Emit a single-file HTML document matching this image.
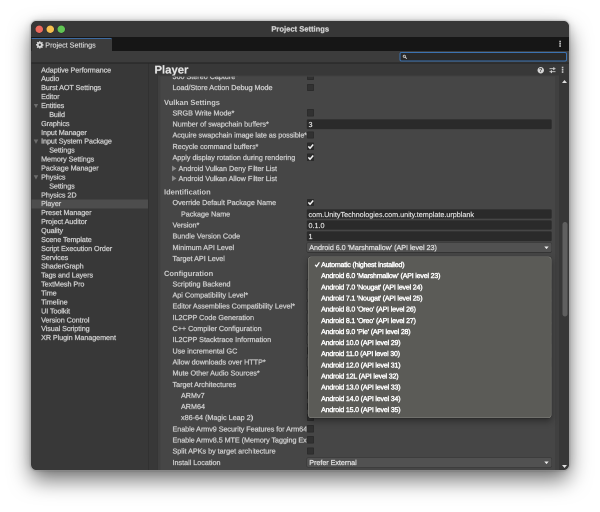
<!DOCTYPE html>
<html lang="en"><head><meta charset="utf-8"><title>Project Settings</title>
<style>
html,body{margin:0;padding:0;overflow:hidden}
body{width:600px;height:512px;background:#fff;overflow:hidden;position:relative;font-family:"Liberation Sans",sans-serif;font-size:7.2px;color:#cacaca;-webkit-text-stroke:.3px #cacaca;-webkit-font-smoothing:antialiased}
.a{position:absolute}
#root{position:absolute;left:0;top:0;width:600px;height:512px;zoom:2;transform:scale(.5);transform-origin:0 0;text-rendering:geometricPrecision;will-change:transform}
#win{position:absolute;left:31.1px;top:21.1px;width:537.7px;height:448.7px;border-radius:5.5px;background:#383838;overflow:hidden}
#inner{left:.4px;top:.4px;width:537.5px;height:448.5px}
#shadow{position:absolute;left:31.1px;top:21.1px;width:537.7px;height:448.7px;border-radius:5.5px;box-shadow:0 0 0 .5px rgba(255,255,255,.3),0 10px 22px rgba(0,0,0,.55),0 0 2px rgba(0,0,0,.5),0 0 10px rgba(0,0,0,.14)}
#title{left:-1px;top:-1px;width:540px;height:16.6px;background:#373737}
#title span{position:absolute;left:1px;width:537.5px;text-align:center;top:4.6px;font-weight:bold;font-size:7.6px;line-height:9px;color:#cfcfcf}
.tl{position:absolute;top:5px;width:7.3px;height:7.3px;border-radius:50%;box-shadow:0 0 0 .35px rgba(0,0,0,.35)}
#tabbar{left:0;top:15.6px;width:100%;box-shadow:-1px 0 0 #161616,1px 0 0 #161616;height:13.7px;background:#161616}
#tab{left:0;top:.9px;width:80.6px;height:12.8px;background:#3c3c3c;border-top:1.4px solid #3e6ba1;box-sizing:border-box;border-top-right-radius:1.6px}
#tab span{position:absolute;left:13.8px;top:2.2px;line-height:9px;color:#dadada;font-size:7.2px;-webkit-text-stroke:.15px #dadada}
#toolbar{left:0;top:29.3px;width:100%;box-shadow:-1px 0 0 #3c3c3c,1px 0 0 #3c3c3c;height:11.7px;background:#3c3c3c}
#search{left:367.8px;top:1.2px;width:167.8px;height:9.6px;box-sizing:border-box;border:1px solid #3b72b1;border-radius:2px;background:#292929}
#line1{left:0;top:41px;width:100%;height:.8px;background:#232323}
#sidebar{left:0;top:41.8px;width:116.3px;height:410px;background:#383838}
#split{left:116.3px;top:41.8px;width:.9px;height:410px;background:#2b2b2b}
.si{position:absolute;height:9px;line-height:9px;white-space:pre;letter-spacing:-.06px}
.sel{position:absolute;left:0;width:116.3px;height:8.9px;background:#4d4d4d}
.tri{position:absolute;width:4.6px;height:4.4px;background:#6c6c6c;clip-path:polygon(0 0,100% 0,50% 100%)}
.trr{position:absolute;width:4.6px;height:6px;background:#8c8c8c;clip-path:polygon(0 0,100% 50%,0 100%)}
#head{left:117.2px;top:41.8px;width:420.3px;height:12.4px;background:#383838}
#head b{position:absolute;left:5.8px;top:-.4px;font-size:11.3px;line-height:14px;color:#e6e6e6;letter-spacing:0}
#frame{left:126.6px;top:53.8px;width:400.7px;height:394.7px;background:#404040}
#content{left:127px;top:54.2px;width:397px;height:394.3px;overflow:hidden}
#cbg{left:2.1px;top:1px;width:394.4px;height:394px;background:#464646}
#cb{left:126.1px;top:53.8px;width:.6px;height:394.7px;background:#343434}
#track{left:527.5px;top:54.2px;width:10px;height:394.3px;background:#373737}
#thumb{left:530.8px;top:200.3px;width:5.4px;height:94.5px;border-radius:2.8px;background:#5f5f5f}
.lb{position:absolute;height:10px;line-height:10px;white-space:pre;overflow:hidden}
.h{font-weight:bold;color:#cdcdcd;font-size:7.5px;-webkit-text-stroke:0}
.ck{position:absolute;left:148.4px;width:7.3px;height:7.3px;background:#313131;border-radius:1.1px;box-shadow:inset 0 0 0 .6px #292929}
.ck.on{background:#2b2b2b}
.fd{position:absolute;left:148.6px;width:244.4px;height:9.3px;background:#2a2a2a;border-radius:1.2px;box-shadow:0 0 0 .3px #333;line-height:11.6px;color:#dedede;-webkit-text-stroke:.22px #dedede;white-space:pre;overflow:hidden;text-indent:1.4px}
.dd{position:absolute;left:148.6px;width:244.4px;height:9.4px;background:#515151;border-radius:1.2px;box-shadow:0 0 0 .5px #353535;line-height:10.4px;color:#dcdcdc;-webkit-text-stroke:.3px #dcdcdc;letter-spacing:-.04px;white-space:pre;overflow:hidden;text-indent:2.2px}
.dd i{position:absolute;right:2.6px;top:3.5px;width:4.8px;height:2.9px;background:#ececec;clip-path:polygon(0 0,100% 0,50% 100%)}
#menu{left:276.6px;top:234.9px;width:243.3px;height:161.7px;border-radius:3.2px;background:#5b5b57;box-shadow:inset 0 0 0 .55px rgba(140,140,134,.85),0 0 0 .5px rgba(30,30,30,.55),0 3px 7px rgba(0,0,0,.38)}
.mi{position:absolute;left:13px;height:11px;line-height:11px;white-space:pre;color:#fff;font-size:7px;letter-spacing:-.16px;-webkit-text-stroke:.42px #fff}
</style></head><body>
<div id="root"><div id="shadow"></div>
<div id="win"><div id="inner" class="a">
<div id="title" class="a"><div class="tl" style="left:5px;background:#ed6a5e"></div><div class="tl" style="left:16.1px;background:#f5bf4f"></div><div class="tl" style="left:27.2px;background:#61c554"></div><span>Project Settings</span></div>
<div id="tabbar" class="a"><div id="tab" class="a">
<svg class="a" style="left:4.3px;top:1.9px" width="7.6" height="7.6" viewBox="-0.5 -0.5 17 17"><path fill="#d8d8d8" fill-rule="evenodd" d="M6.6 0h2.8l.4 2.2 1.3.55 1.85-1.3 2 2-1.3 1.85.55 1.3 2.2.4v2.8l-2.2.4-.55 1.3 1.3 1.85-2 2-1.85-1.3-1.3.55-.4 2.2H6.6l-.4-2.2-1.3-.55-1.85 1.3-2-2 1.3-1.85-.55-1.3L-.4 9.4V6.6l2.2-.4.55-1.3-1.3-1.85 2-2L4.9 2.35l1.3-.55zM8 5.4a2.6 2.6 0 100 5.2 2.6 2.6 0 000-5.2z"/></svg>
<span>Project Settings</span></div>
<svg class="a" style="left:527.4px;top:3.6px" width="2.2" height="6.6" viewBox="0 0 2.2 6.6"><rect x=".3" y=".2" width="1.6" height="1.7" fill="#c4c4c4"/><rect x=".3" y="2.45" width="1.6" height="1.7" fill="#c4c4c4"/><rect x=".3" y="4.7" width="1.6" height="1.7" fill="#c4c4c4"/></svg>
</div>
<div id="toolbar" class="a"><div id="search" class="a"><svg class="a" style="left:2.1px;top:1.6px" width="4.6" height="4.6" viewBox="0 0 12 12"><circle cx="4.6" cy="4.6" r="2.9" fill="none" stroke="#d8d8d8" stroke-width="2"/><path d="M6.8 6.8l3.6 3.6" stroke="#d8d8d8" stroke-width="2.4" stroke-linecap="round"/></svg></div></div>
<div id="line1" class="a"></div>
<div id="sidebar" class="a">

<div class="si" style="top:2.5px;left:9.6px">Adaptive Performance</div>
<div class="si" style="top:11.0px;left:9.6px">Audio</div>
<div class="si" style="top:20.0px;left:9.6px">Burst AOT Settings</div>
<div class="si" style="top:29.0px;left:9.6px">Editor</div>
<i class="tri" style="left:2.2px;top:40.47px"></i><div class="si" style="top:38.0px;left:9.6px">Entities</div>
<div class="si" style="top:47.0px;left:17.7px">Build</div>
<div class="si" style="top:56.0px;left:9.6px">Graphics</div>
<div class="si" style="top:65.0px;left:9.6px">Input Manager</div>
<i class="tri" style="left:2.2px;top:76.19px"></i><div class="si" style="top:73.5px;left:9.6px">Input System Package</div>
<div class="si" style="top:82.5px;left:17.7px">Settings</div>
<div class="si" style="top:91.5px;left:9.6px">Memory Settings</div>
<div class="si" style="top:100.5px;left:9.6px">Package Manager</div>
<i class="tri" style="left:2.2px;top:111.91px"></i><div class="si" style="top:109.5px;left:9.6px">Physics</div>
<div class="si" style="top:118.5px;left:17.7px">Settings</div>
<div class="si" style="top:127.5px;left:9.6px">Physics 2D</div>
<div class="sel" style="top:136.30px"></div><div class="si" style="top:136.0px;left:9.6px">Player</div>
<div class="si" style="top:145.0px;left:9.6px">Preset Manager</div>
<div class="si" style="top:154.0px;left:9.6px">Project Auditor</div>
<div class="si" style="top:163.0px;left:9.6px">Quality</div>
<div class="si" style="top:172.0px;left:9.6px">Scene Template</div>
<div class="si" style="top:181.0px;left:9.6px">Script Execution Order</div>
<div class="si" style="top:190.0px;left:9.6px">Services</div>
<div class="si" style="top:198.5px;left:9.6px">ShaderGraph</div>
<div class="si" style="top:207.5px;left:9.6px">Tags and Layers</div>
<div class="si" style="top:216.5px;left:9.6px">TextMesh Pro</div>
<div class="si" style="top:225.5px;left:9.6px">Time</div>
<div class="si" style="top:234.5px;left:9.6px">Timeline</div>
<div class="si" style="top:243.5px;left:9.6px">UI Toolkit</div>
<div class="si" style="top:252.5px;left:9.6px">Version Control</div>
<div class="si" style="top:261.0px;left:9.6px">Visual Scripting</div>
<div class="si" style="top:270.0px;left:9.6px">XR Plugin Management</div>
</div><div id="split" class="a"></div>
<div id="head" class="a"><b>Player</b>
<div class="a" style="left:388.7px;top:3.5px;width:6.6px;height:6.6px;border-radius:50%;background:#d4d4d4;color:#383838;font-weight:bold;font-size:5.8px;line-height:6.9px;text-align:center;-webkit-text-stroke:0">?</div>
<svg class="a" style="left:400.6px;top:3.7px" width="6.2" height="6.4" viewBox="0 0 12.4 12.8"><path d="M0 3.4h12.4M0 9.4h12.4" stroke="#cfcfcf" stroke-width="1.7"/><rect x="7.4" y=".6" width="2.4" height="5.6" fill="#cfcfcf"/><rect x="2.6" y="6.6" width="2.4" height="5.6" fill="#cfcfcf"/></svg>
<svg class="a" style="left:413px;top:3.3px" width="2.2" height="6.6" viewBox="0 0 2.2 6.6"><rect x=".3" y=".2" width="1.6" height="1.7" fill="#c4c4c4"/><rect x=".3" y="2.45" width="1.6" height="1.7" fill="#c4c4c4"/><rect x=".3" y="4.7" width="1.6" height="1.7" fill="#c4c4c4"/></svg>
</div>
<div id="frame" class="a"></div><div id="cb" class="a"></div><div id="track" class="a"><svg class="a" style="left:3.2px;top:4px" width="5" height="4" viewBox="0 0 10 8"><path d="M0 7L5 1l5 6z" fill="#e0e0e0"/></svg><svg class="a" style="left:3.2px;top:388.6px" width="5" height="4" viewBox="0 0 10 8"><path d="M0 1L5 7l5-6z" fill="#e0e0e0"/></svg></div><div id="thumb" class="a"></div>
<div id="content" class="a"><div id="cbg" class="a"></div><div class="a" style="left:0;top:0;width:100%;height:100%;clip-path:inset(1px 0 0 0)">
<div class="lb" style="left:14.0px;top:-3.5px;width:133.9px">360 Stereo Capture*</div>
<div class="lb" style="left:14.0px;top:7.5px;width:133.9px">Load/Store Action Debug Mode</div>
<div class="lb h" style="left:5.5px;top:22.5px">Vulkan Settings</div>
<div class="lb" style="left:14.0px;top:33.0px;width:133.9px">SRGB Write Mode*</div>
<div class="lb" style="left:14.0px;top:44.0px;width:133.9px">Number of swapchain buffers*</div>
<div class="lb" style="left:14.0px;top:55.0px;width:133.9px;letter-spacing:-.045px">Acquire swapchain image late as possible*</div>
<div class="lb" style="left:14.0px;top:66.5px;width:133.9px">Recycle command buffers*</div>
<div class="lb" style="left:14.0px;top:77.5px;width:133.9px">Apply display rotation during rendering</div>
<i class="trr" style="left:13.4px;top:89.8px"></i><div class="lb" style="left:20.0px;top:88.5px">Android Vulkan Deny Filter List</div>
<i class="trr" style="left:13.4px;top:99.7px"></i><div class="lb" style="left:20.0px;top:98.5px">Android Vulkan Allow Filter List</div>
<div class="lb h" style="left:5.5px;top:112.0px">Identification</div>
<div class="lb" style="left:14.0px;top:122.5px;width:133.9px">Override Default Package Name</div>
<div class="lb" style="left:22.5px;top:134.0px;width:125.4px">Package Name</div>
<div class="lb" style="left:14.0px;top:145.0px;width:133.9px">Version*</div>
<div class="lb" style="left:14.0px;top:156.0px;width:133.9px">Bundle Version Code</div>
<div class="lb" style="left:14.0px;top:167.5px;width:133.9px">Minimum API Level</div>
<div class="lb" style="left:14.0px;top:178.5px;width:133.9px">Target API Level</div>
<div class="lb h" style="left:5.5px;top:193.5px">Configuration</div>
<div class="lb" style="left:14.0px;top:204.0px;width:133.9px">Scripting Backend</div>
<div class="lb" style="left:14.0px;top:215.0px;width:133.9px">Api Compatibility Level*</div>
<div class="lb" style="left:14.0px;top:226.0px;width:133.9px">Editor Assemblies Compatibility Level*</div>
<div class="lb" style="left:14.0px;top:237.5px;width:133.9px">IL2CPP Code Generation</div>
<div class="lb" style="left:14.0px;top:248.5px;width:133.9px">C++ Compiler Configuration</div>
<div class="lb" style="left:14.0px;top:259.5px;width:133.9px">IL2CPP Stacktrace Information</div>
<div class="lb" style="left:14.0px;top:271.0px;width:133.9px">Use incremental GC</div>
<div class="lb" style="left:14.0px;top:282.0px;width:133.9px">Allow downloads over HTTP*</div>
<div class="lb" style="left:14.0px;top:293.0px;width:133.9px">Mute Other Audio Sources*</div>
<div class="lb" style="left:14.0px;top:304.5px;width:133.9px">Target Architectures</div>
<div class="lb" style="left:22.5px;top:315.5px;width:125.4px">ARMv7</div>
<div class="lb" style="left:22.5px;top:326.5px;width:125.4px">ARM64</div>
<div class="lb" style="left:22.5px;top:337.5px;width:125.4px">x86-64 (Magic Leap 2)</div>
<div class="lb" style="left:14.0px;top:349.0px;width:133.9px;letter-spacing:-.045px">Enable Armv9 Security Features for Arm64</div>
<div class="lb" style="left:14.0px;top:360.0px;width:133.9px;letter-spacing:-.045px">Enable Armv8.5 MTE (Memory Tagging Extension)</div>
<div class="lb" style="left:14.0px;top:371.0px;width:133.9px">Split APKs by target architecture</div>
<div class="lb" style="left:14.0px;top:382.5px;width:133.9px">Install Location</div>
<div class="ck" style="top:-3.0px"></div>
<div class="ck" style="top:8.2px"></div>
<div class="ck" style="top:33.4px"></div>
<div class="ck" style="top:55.7px"></div>
<div class="ck on" style="top:66.9px"><svg class="a" style="left:.5px;top:.7px" width="6.6" height="6.05" viewBox="0 0 12 11"><path d="M1.6 5.3l3 3.3L10.4 1.9" fill="none" stroke="#f2f2f2" stroke-width="2.7"/></svg></div>
<div class="ck on" style="top:78.0px"><svg class="a" style="left:.5px;top:.7px" width="6.6" height="6.05" viewBox="0 0 12 11"><path d="M1.6 5.3l3 3.3L10.4 1.9" fill="none" stroke="#f2f2f2" stroke-width="2.7"/></svg></div>
<div class="ck on" style="top:123.2px"><svg class="a" style="left:.5px;top:.7px" width="6.6" height="6.05" viewBox="0 0 12 11"><path d="M1.6 5.3l3 3.3L10.4 1.9" fill="none" stroke="#f2f2f2" stroke-width="2.7"/></svg></div>
<div class="ck on" style="top:271.3px"><svg class="a" style="left:.5px;top:.7px" width="6.6" height="6.05" viewBox="0 0 12 11"><path d="M1.6 5.3l3 3.3L10.4 1.9" fill="none" stroke="#f2f2f2" stroke-width="2.7"/></svg></div>
<div class="ck" style="top:293.6px"></div>
<div class="ck" style="top:315.9px"></div>
<div class="ck on" style="top:327.1px"><svg class="a" style="left:.5px;top:.7px" width="6.6" height="6.05" viewBox="0 0 12 11"><path d="M1.6 5.3l3 3.3L10.4 1.9" fill="none" stroke="#f2f2f2" stroke-width="2.7"/></svg></div>
<div class="ck" style="top:338.2px"></div>
<div class="ck" style="top:349.4px"></div>
<div class="ck" style="top:360.5px"></div>
<div class="ck" style="top:371.7px"></div>
<div class="fd" style="top:43.8px">3</div>
<div class="fd" style="top:133.6px">com.UnityTechnologies.com.unity.template.urpblank</div>
<div class="fd" style="top:144.7px">0.1.0</div>
<div class="fd" style="top:155.8px">1</div>
<div class="dd" style="top:167.1px">Android 6.0 'Marshmallow' (API level 23)<i></i></div>
<div class="dd" style="top:203.7px">IL2CPP<i></i></div>
<div class="dd" style="top:214.9px">.NET Standard 2.1<i></i></div>
<div class="dd" style="top:226.0px">Default<i></i></div>
<div class="dd" style="top:237.2px">Faster runtime<i></i></div>
<div class="dd" style="top:248.3px">Release<i></i></div>
<div class="dd" style="top:259.5px">Method Name<i></i></div>
<div class="dd" style="top:281.8px">Not allowed<i></i></div>
<div class="dd" style="top:382.1px">Prefer External<i></i></div>
</div></div>
<div id="menu" class="a">
<svg class="a" style="left:6.2px;top:5.3px" width="5.6" height="6" viewBox="0 0 11 12"><path d="M1.3 6.6l2.8 3.4L9.7 1.6" fill="none" stroke="#fff" stroke-width="2.5"/></svg>
<div class="mi" style="top:2.60px">Automatic (highest installed)</div>
<div class="mi" style="top:13.75px">Android 6.0 'Marshmallow' (API level 23)</div>
<div class="mi" style="top:24.91px">Android 7.0 'Nougat' (API level 24)</div>
<div class="mi" style="top:36.06px">Android 7.1 'Nougat' (API level 25)</div>
<div class="mi" style="top:47.22px">Android 8.0 'Oreo' (API level 26)</div>
<div class="mi" style="top:58.37px">Android 8.1 'Oreo' (API level 27)</div>
<div class="mi" style="top:69.52px">Android 9.0 'Pie' (API level 28)</div>
<div class="mi" style="top:80.68px">Android 10.0 (API level 29)</div>
<div class="mi" style="top:91.83px">Android 11.0 (API level 30)</div>
<div class="mi" style="top:102.99px">Android 12.0 (API level 31)</div>
<div class="mi" style="top:114.14px">Android 12L (API level 32)</div>
<div class="mi" style="top:125.29px">Android 13.0 (API level 33)</div>
<div class="mi" style="top:136.45px">Android 14.0 (API level 34)</div>
<div class="mi" style="top:147.60px">Android 15.0 (API level 35)</div>
</div>
</div></div></div></body></html>
